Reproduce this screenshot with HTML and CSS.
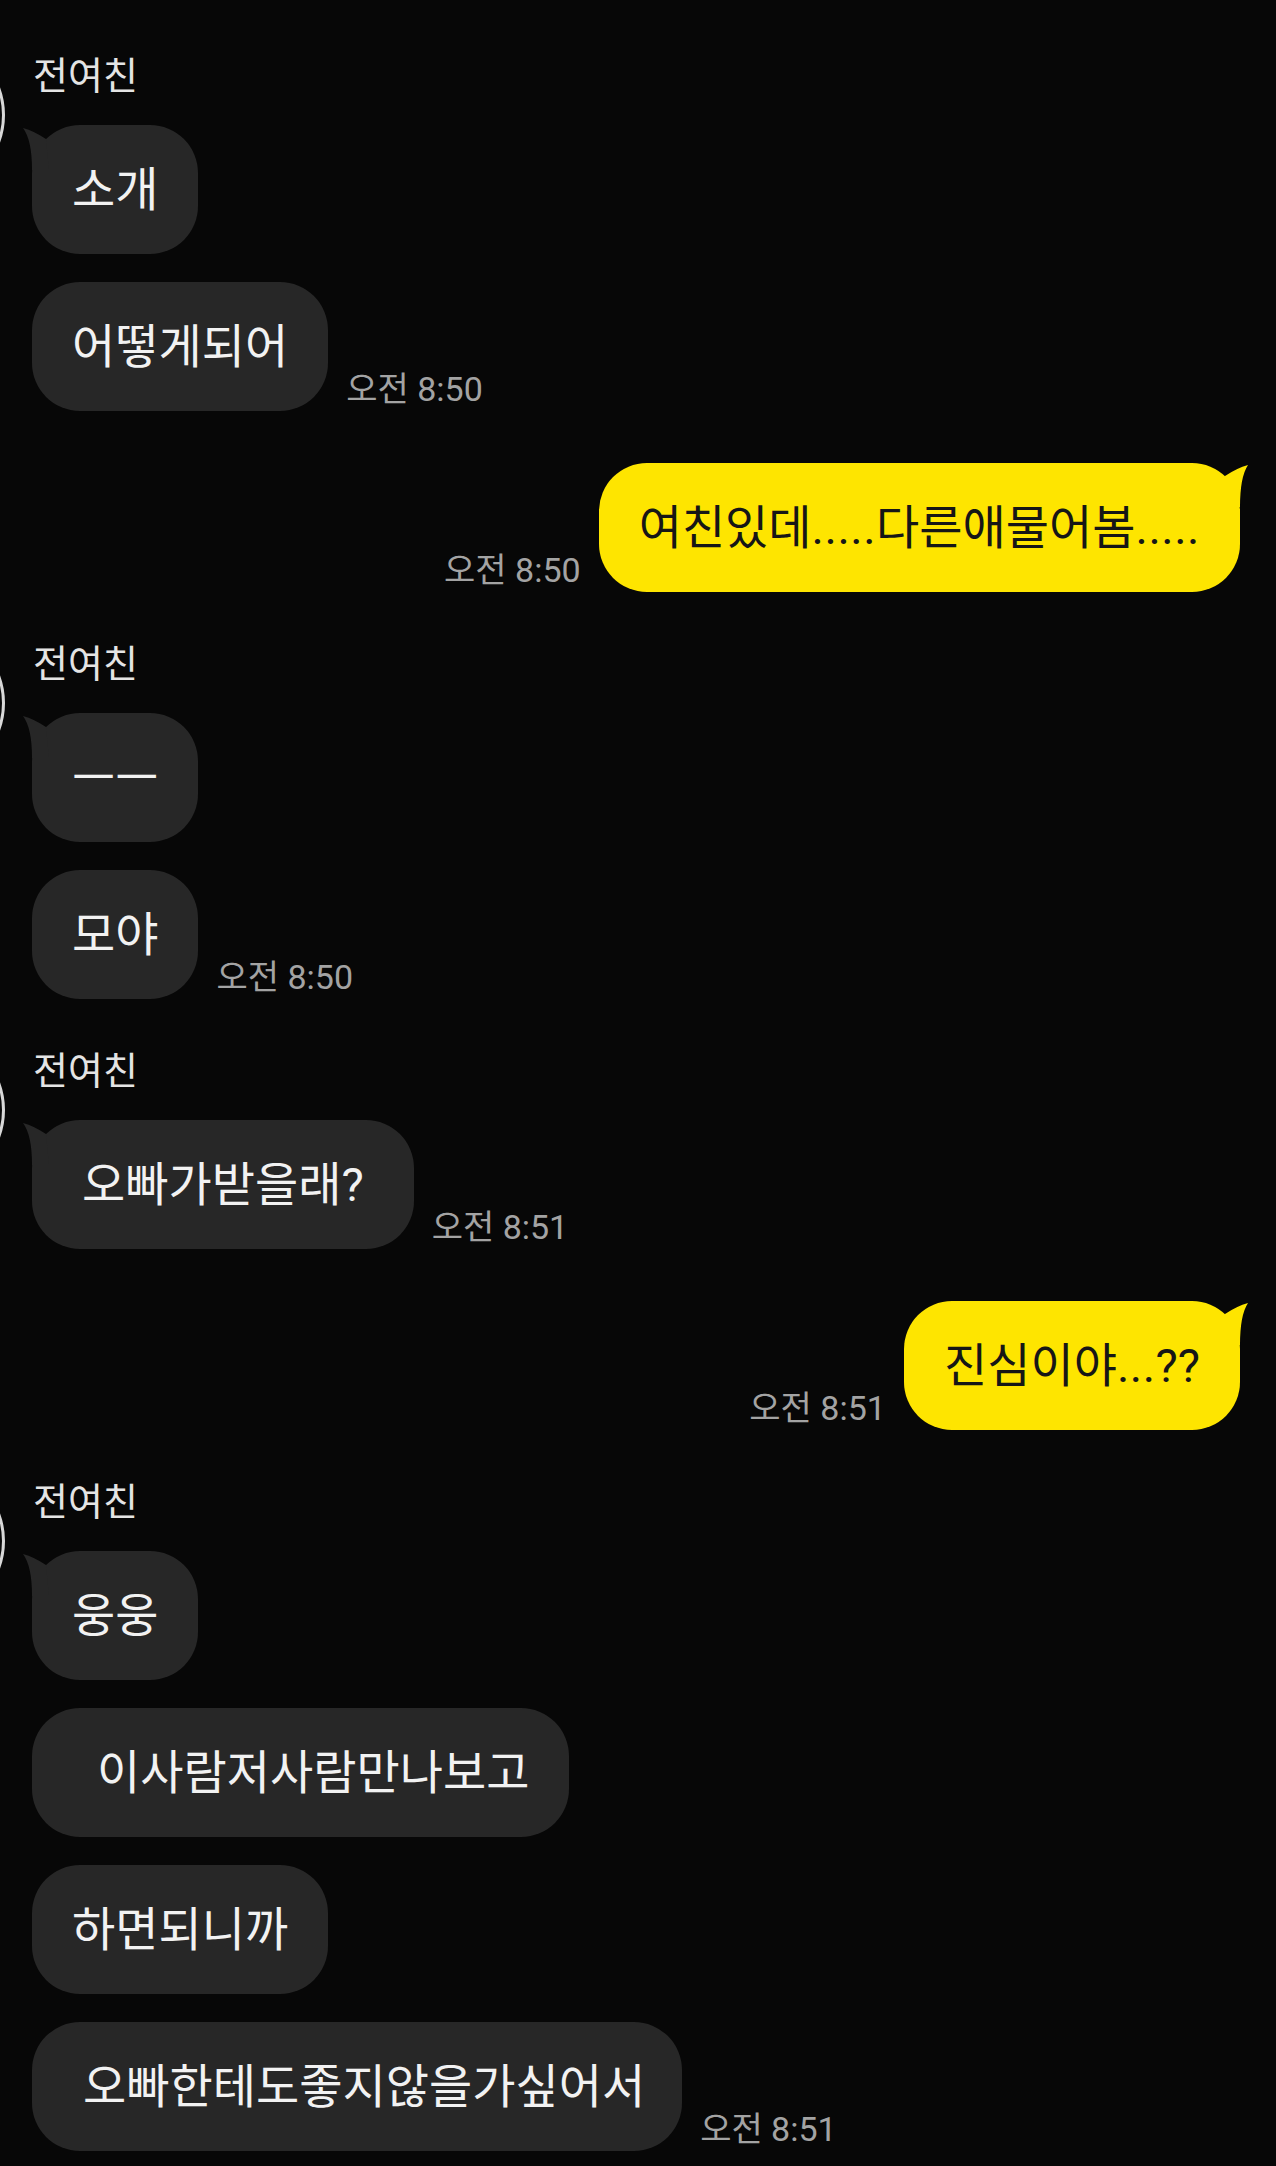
FILE: index.html
```html
<!DOCTYPE html>
<html lang="ko">
<head>
<meta charset="utf-8">
<title>전여친</title>
<link rel="stylesheet" href="styles.css">
</head>
<body>
<main class="chat">
  <section class="group in">
    <div class="avatar"></div>
    <div class="name">전여친</div>
    <div class="row"><div class="bubble tail">소개</div></div>
    <div class="row"><div class="bubble">어떻게되어</div><span class="time">오전 8:50</span></div>
  </section>

  <section class="group out">
    <div class="row"><span class="time">오전 8:50</span><div class="bubble yellow tail">여친있데<span class="dots">.....</span>다른애물어봄<span class="dots">.....</span></div></div>
  </section>

  <section class="group in">
    <div class="avatar"></div>
    <div class="name">전여친</div>
    <div class="row"><div class="bubble tail">ㅡㅡ</div></div>
    <div class="row"><div class="bubble">모야</div><span class="time">오전 8:50</span></div>
  </section>

  <section class="group in">
    <div class="avatar"></div>
    <div class="name">전여친</div>
    <div class="row"><div class="bubble tail wide">오빠가받을래?</div><span class="time">오전 8:51</span></div>
  </section>

  <section class="group out">
    <div class="row"><span class="time">오전 8:51</span><div class="bubble yellow tail">진심이야<span class="dots">...</span>??</div></div>
  </section>

  <section class="group in">
    <div class="avatar"></div>
    <div class="name">전여친</div>
    <div class="row"><div class="bubble tail">웅웅</div></div>
    <div class="row"><div class="bubble lead">이사람저사람만나보고</div></div>
    <div class="row"><div class="bubble">하면되니까</div></div>
    <div class="row"><div class="bubble lead-s">오빠한테도좋지않을가싶어서</div><span class="time">오전 8:51</span></div>
  </section>
</main>
</body>
</html>
```

FILE: styles.css
```css
html, body {
  margin: 0;
  padding: 0;
  background: #070707;
}

body {
  font-family: Roboto, "Noto Sans CJK KR", sans-serif;
  color: #f0f0f0;
  width: 1276px;
  height: 2166px;
  overflow: hidden;
}

.chat {
  display: flex;
  flex-direction: column;
  gap: 52px;
  padding: 56px 36px 0 32px;
}

.group {
  position: relative;
  display: flex;
  flex-direction: column;
  gap: 28px;
}

.group.out {
  align-items: flex-end;
}

.avatar {
  position: absolute;
  left: -187px;
  top: -21px;
  width: 154px;
  height: 154px;
  border-radius: 50%;
  border: 3px solid #d8d8d8;
  background: #0a0a0a;
}

.name {
  font-size: 38px;
  line-height: 40px;
  color: #e4e4e4;
  padding-left: 1px;
  margin-bottom: 1px;
}

.row {
  display: flex;
  align-items: flex-end;
  gap: 18px;
}

.bubble {
  position: relative;
  background: #272727;
  color: #f2f2f2;
  font-size: 47px;
  line-height: 57px;
  padding: 36px 40px;
  border-radius: 48px;
  white-space: nowrap;
}

.bubble.wide {
  padding-left: 50px;
  padding-right: 50px;
}

.bubble.lead {
  padding-left: 65px;
}

.bubble.lead-s {
  padding-left: 51px;
  padding-right: 37px;
}

.bubble.yellow {
  background: #fee500;
  color: #161616;
}

.dots {
  letter-spacing: 0.5px;
}

.bubble.tail::before {
  content: "";
  position: absolute;
  top: 3px;
  left: -9px;
  width: 30px;
  height: 42px;
  background: #272727;
  clip-path: path("M0 0 Q 11 3 23 11 L 26 42 L 9 42 Q 9 12 0 0 Z");
}

.bubble.yellow.tail::before {
  left: auto;
  right: -8px;
  top: 2px;
  background: #fee500;
  clip-path: path("M30 0 Q 19 3 7 11 L 4 42 L 22 42 Q 22 12 30 0 Z");
}

.time {
  font-size: 34px;
  line-height: 34px;
  color: #a3a3a3;
  margin-bottom: 5px;
  white-space: nowrap;
}
```
